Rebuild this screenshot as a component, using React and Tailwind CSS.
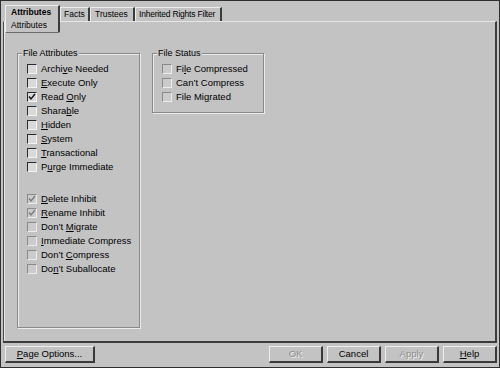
const attrsTop = [
  { pre: 'Archi', key: 'v', post: 'e Needed' },
  { pre: '', key: 'E', post: 'xecute Only' },
  { pre: 'Read ', key: 'O', post: 'nly', checked: true },
  { pre: 'Shara', key: 'b', post: 'le' },
  { pre: '', key: 'H', post: 'idden' },
  { pre: '', key: 'S', post: 'ystem' },
  { pre: '', key: 'T', post: 'ransactional' },
  { pre: 'P', key: 'u', post: 'rge Immediate' },
];

const attrsBottom = [
  { pre: '', key: 'D', post: 'elete Inhibit', checked: true, dim: true },
  { pre: '', key: 'R', post: 'ename Inhibit', checked: true, dim: true },
  { pre: 'Don\u2019t ', key: 'M', post: 'igrate', dim: true },
  { pre: '', key: 'I', post: 'mmediate Compress', dim: true },
  { pre: 'Don\u2019t ', key: 'C', post: 'ompress', dim: true },
  { pre: 'Do', key: 'n', post: '\u2019t Suballocate', dim: true },
];

const status = [
  { pre: 'Fi', key: 'l', post: 'e Compressed', dim: true },
  { pre: 'Can\u2019t Compress', key: '', post: '', dim: true },
  { pre: 'File Mi', key: 'g', post: 'rated', dim: true },
];

function Box({ checked, dim }) {
  return (
    <span
      className={
        dim
          ? 'flex h-[10px] w-[10px] shrink-0 items-center justify-center border border-t-[#8a8a8a] border-l-[#8a8a8a] border-b-[#ececec] border-r-[#ececec] bg-[#cbcbcb]'
          : 'flex h-[10px] w-[10px] shrink-0 items-center justify-center border border-t-[#2c2c2c] border-l-[#2c2c2c] border-b-[#f4f4f4] border-r-[#f4f4f4] bg-[#d9d9d9]'
      }
    >
      {checked && (
        <svg width="8" height="8" viewBox="0 0 8 8">
          <polyline
            points="1,3.5 3,6 7,1"
            fill="none"
            stroke={dim ? '#7a7a7a' : '#111'}
            strokeWidth="1.4"
          />
        </svg>
      )}
    </span>
  );
}

function Label({ pre, k, post }) {
  return (
    <span className="whitespace-nowrap">
      {pre}
      {k && <span className="underline decoration-1 underline-offset-[1px]">{k}</span>}
      {post}
    </span>
  );
}

function Check({ item }) {
  return (
    <div className="flex h-[14px] items-center gap-[4px]">
      <Box checked={item.checked} dim={item.dim} />
      <Label pre={item.pre} k={item.key} post={item.post} />
    </div>
  );
}

function Group({ title, className, children }) {
  return (
    <div
      className={`relative border border-[#8a8a8a] shadow-[1px_1px_0_#ebebeb,inset_1px_1px_0_#ebebeb] ${className}`}
    >
      <span className="absolute left-[4px] top-[-7px] bg-[#c3c3c3] px-[1px] text-[9px] leading-[12px]">
        {title}
      </span>
      {children}
    </div>
  );
}

function Btn({ children, disabled, w }) {
  return (
    <button
      type="button"
      className={`flex h-[17px] items-center justify-center border border-t-[#ededed] border-l-[#ededed] border-b-2 border-r-2 border-b-[#3a3a3a] border-r-[#3a3a3a] bg-[#c3c3c3] text-[9.5px] ${w} ${
        disabled ? 'text-[#8e8e8e] [text-shadow:1px_1px_0_#eeeeee]' : 'text-black'
      }`}
    >
      {children}
    </button>
  );
}

export default function App() {
  return (
    <div className="flex h-[368px] w-[500px] flex-col border border-[#2f2f2f] bg-[#c3c3c3] font-['Liberation_Sans',Arial,sans-serif] text-black">
      <div className="relative z-10 flex h-[20px] items-start pl-[4px] pt-[4px] text-[8.5px]">
        <div className="h-[28px] w-[55px] rounded-br-[2px] border-t border-l border-r-2 border-b border-t-[#ececec] border-l-[#ececec] border-r-[#3c3c3c] border-b-[#6a6a6a] bg-[#c3c3c3] pl-[5px]">
          <div className="flex h-[13px] items-center font-bold">Attributes</div>
          <div className="flex h-[12px] items-center">Attributes</div>
        </div>
        <div className="mt-[2px] flex h-[14px] w-[30px] items-center border-t border-l border-r-2 border-t-[#ececec] border-l-[#ececec] border-r-[#3c3c3c] pl-[3px]">
          Facts
        </div>
        <div className="mt-[2px] flex h-[14px] w-[45px] items-center border-t border-l border-r-2 border-t-[#ececec] border-l-[#ececec] border-r-[#3c3c3c] pl-[4px]">
          Trustees
        </div>
        <div className="mt-[2px] flex h-[14px] w-[87px] items-center whitespace-nowrap border-t border-l border-r-2 border-t-[#ececec] border-l-[#ececec] border-r-[#3c3c3c] pl-[3px] tracking-[-0.2px]">
          Inherited Rights Filter
        </div>
      </div>

      <div className="mx-[2px] flex h-[322px] items-start border-t border-l border-r-2 border-b-2 border-t-[#e6e6e6] border-l-[#4a4a4a] border-r-[#3c3c3c] border-b-[#3c3c3c] text-[9.5px] shadow-[inset_1px_0_0_#e6e6e6]">
        <Group title="File Attributes" className="ml-[13px] mt-[31px] h-[275px] w-[123px]">
          <div className="flex flex-col pl-[9px] pt-[8px]">
            {attrsTop.map((a) => (
              <Check key={a.pre + a.key + a.post} item={a} />
            ))}
            <div className="h-[18px]" />
            {attrsBottom.map((a) => (
              <Check key={a.pre + a.key + a.post} item={a} />
            ))}
          </div>
        </Group>
        <Group title="File Status" className="ml-[12px] mt-[31px] h-[60px] w-[112px]">
          <div className="flex flex-col pl-[9px] pt-[8px]">
            {status.map((a) => (
              <Check key={a.pre + a.key + a.post} item={a} />
            ))}
          </div>
        </Group>
      </div>

      <div className="mt-[3px] flex items-start pl-[4px] pr-[2px]">
        <Btn w="w-[90px]">
          <Label pre="" k="P" post="age Options..." />
        </Btn>
        <div className="ml-auto flex gap-[4px]">
          <Btn w="w-[54px]" disabled>
            OK
          </Btn>
          <Btn w="w-[54px]">Cancel</Btn>
          <Btn w="w-[54px]" disabled>
            Apply
          </Btn>
          <Btn w="w-[54px]">
            <Label pre="" k="H" post="elp" />
          </Btn>
        </div>
      </div>
    </div>
  );
}
